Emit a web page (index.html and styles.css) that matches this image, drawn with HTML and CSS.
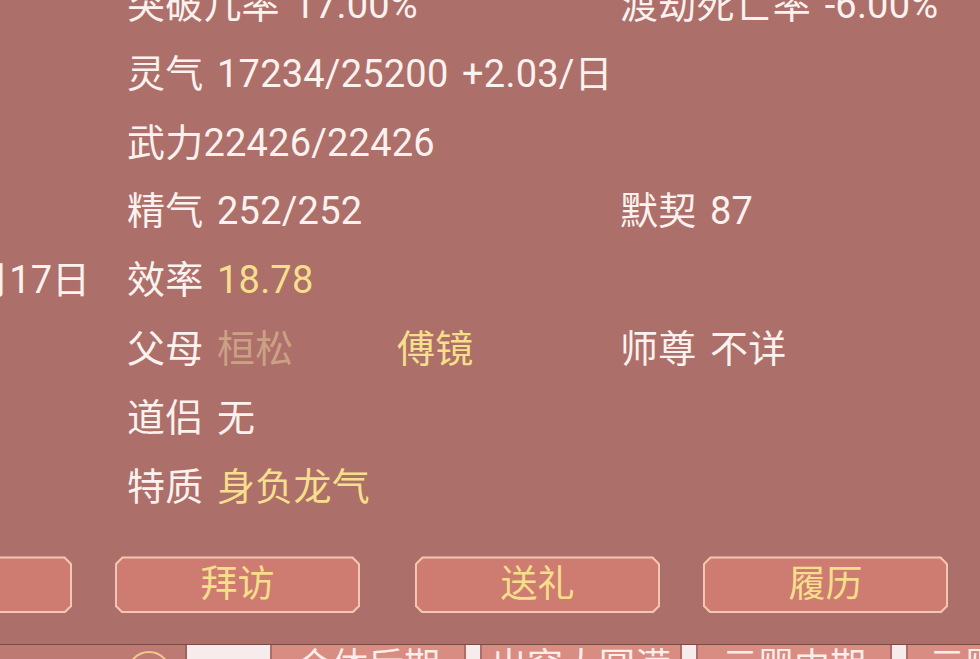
FILE: index.html
```html
<!DOCTYPE html>
<html lang="zh">
<head>
  <meta charset="UTF-8">
  <meta name="viewport" content="width=device-width, initial-scale=1.0">
  <title>人物详情</title>
  <link rel="stylesheet" href="styles.css">
</head>
<body>
  <div class="panel">
    <div class="stats">
      <div class="row">
        <div class="side"></div>
        <div class="cell wide">突破几率 17.00%</div>
        <div class="cell">渡劫死亡率 -6.00%</div>
      </div>
      <div class="row">
        <div class="side"></div>
        <div class="cell wide">灵气 17234/25200 +2.03/日</div>
        <div class="cell"></div>
      </div>
      <div class="row">
        <div class="side"></div>
        <div class="cell wide">武力22426/22426</div>
        <div class="cell"></div>
      </div>
      <div class="row">
        <div class="side"></div>
        <div class="cell wide">精气 252/252</div>
        <div class="cell">默契 87</div>
      </div>
      <div class="row">
        <div class="side">月17日</div>
        <div class="cell wide">效率 <span class="gold">18.78</span></div>
        <div class="cell"></div>
      </div>
      <div class="row">
        <div class="side"></div>
        <div class="cell">父母 <span class="dim">桓松</span></div>
        <div class="cell"><span class="gold">傅镜</span></div>
        <div class="cell">师尊 不详</div>
      </div>
      <div class="row">
        <div class="side"></div>
        <div class="cell wide">道侣 无</div>
        <div class="cell"></div>
      </div>
      <div class="row">
        <div class="side"></div>
        <div class="cell wide">特质 <span class="gold">身负龙气</span></div>
        <div class="cell"></div>
      </div>
    </div>

    <div class="actions">
      <div class="btn"><span>交谈</span></div>
      <div class="btn"><span>拜访</span></div>
      <div class="btn shift"><span>送礼</span></div>
      <div class="btn"><span>履历</span></div>
    </div>
  </div>

  <div class="under">
    <div class="under-left"><div class="ring"></div></div>
    <div class="under-blank"></div>
    <div class="tabs">
      <div class="tab t1">合体后期</div>
      <div class="tab t2">出窍大圆满</div>
      <div class="tab t3">元婴中期</div>
      <div class="tab t4">元婴初期</div>
    </div>
  </div>
</body>
</html>
```

FILE: styles.css
```css
html, body {
  margin: 0;
  height: 100%;
}

body {
  width: 980px;
  height: 659px;
  overflow: hidden;
  background: #ad6f69;
  color: #fbf2ef;
  font-family: 'Roboto', 'Noto Sans CJK SC', sans-serif;
}

.panel {
  height: 644px;
  border-bottom: 1px solid #7c4a45;
  overflow: hidden;
  display: flex;
  flex-direction: column;
}

.stats {
  margin-top: -29px;
}

.row {
  display: grid;
  grid-template-columns: 127px 270px 223px 1fr;
  height: 68.8px;
  line-height: 68.8px;
  font-size: 38px;
  letter-spacing: 0.2px;
  word-spacing: 4px;
  white-space: nowrap;
}

.side {
  direction: rtl;
  text-align: right;
  padding-right: 37px;
  overflow: hidden;
  letter-spacing: 0;
}

.wide {
  grid-column: span 2;
}

.gold {
  color: #f6df8c;
}

.dim {
  color: #cba186;
}

.actions {
  display: flex;
  gap: 43px;
  margin-top: 35px;
  margin-left: -173px;
}

.btn {
  flex: none;
  width: 245px;
  height: 57px;
  padding: 2px;
  box-sizing: border-box;
  background: #f3c6b2;
  clip-path: polygon(7px 0, calc(100% - 7px) 0, 100% 7px, 100% calc(100% - 7px), calc(100% - 7px) 100%, 7px 100%, 0 calc(100% - 7px), 0 7px);
}

.btn span {
  display: block;
  height: 100%;
  background: #ce7c72;
  color: #f7de8b;
  font-size: 37px;
  line-height: 53px;
  text-align: center;
  clip-path: polygon(6px 0, calc(100% - 6px) 0, 100% 6px, 100% calc(100% - 6px), calc(100% - 6px) 100%, 6px 100%, 0 calc(100% - 6px), 0 6px);
}

.btn.shift {
  margin-left: 12px;
}

.under {
  display: flex;
  height: 14px;
  overflow: hidden;
}

.under-left {
  flex: none;
  width: 185px;
  background: #bd7a73;
  border-right: 2px solid #9d625c;
  position: relative;
}

.ring {
  position: absolute;
  left: 127px;
  top: 6px;
  width: 40px;
  height: 40px;
  border: 2px solid #f2c98c;
  border-radius: 50%;
}

.under-blank {
  flex: none;
  width: 83px;
  background: #f6ecec;
}

.tabs {
  display: flex;
  gap: 14px;
  background: #f6ecec;
}

.tab {
  flex: none;
  background: #d98c82;
  border-left: 2px solid #b06c66;
  border-right: 2px solid #b06c66;
  color: #fbeeea;
  font-size: 36px;
  line-height: 36px;
  padding-top: 4px;
  text-align: center;
  white-space: nowrap;
}

.t1 { width: 192px; }
.t2 { width: 198px; }
.t3 { width: 192px; }
.t4 { width: 192px; text-align: left; padding-left: 21px; }
```
